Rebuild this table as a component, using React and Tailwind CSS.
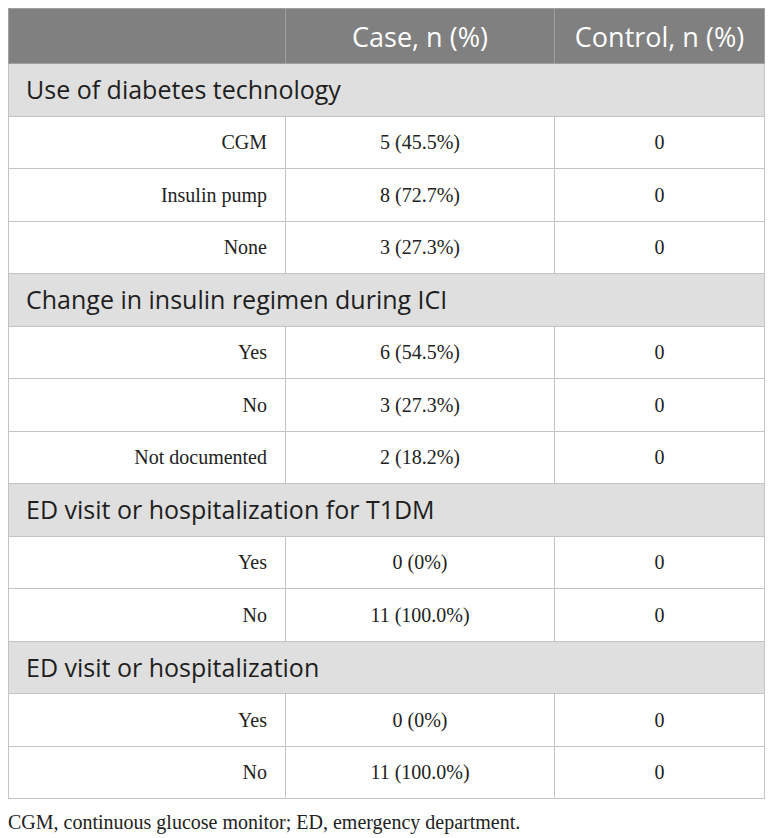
import React from 'react';

const sections = [
  {
    title: 'Use of diabetes technology',
    rows: [
      ['CGM', '5 (45.5%)', '0'],
      ['Insulin pump', '8 (72.7%)', '0'],
      ['None', '3 (27.3%)', '0'],
    ],
  },
  {
    title: 'Change in insulin regimen during ICI',
    rows: [
      ['Yes', '6 (54.5%)', '0'],
      ['No', '3 (27.3%)', '0'],
      ['Not documented', '2 (18.2%)', '0'],
    ],
  },
  {
    title: 'ED visit or hospitalization for T1DM',
    rows: [
      ['Yes', '0 (0%)', '0'],
      ['No', '11 (100.0%)', '0'],
    ],
  },
  {
    title: 'ED visit or hospitalization',
    rows: [
      ['Yes', '0 (0%)', '0'],
      ['No', '11 (100.0%)', '0'],
    ],
  },
];

const sans = "font-['Open_Sans',sans-serif]";
const serif = "font-['Liberation_Serif',serif]";

export default function App() {
  return (
    <div className="bg-white w-[772px] h-[838px] pt-[8px] px-[8px]">
      <table className="w-[756px] border-collapse table-fixed">
        <colgroup>
          <col className="w-[277px]" />
          <col className="w-[269px]" />
          <col className="w-[210px]" />
        </colgroup>
        <thead>
          <tr className={`h-[55px] bg-[#808080] text-white text-[27px] leading-none ${sans}`}>
            <th className="border border-[#a0a0a0] font-normal" />
            <th className="border border-[#a0a0a0] font-normal text-center">Case, n (%)</th>
            <th className="border border-[#a0a0a0] font-normal text-center">Control, n (%)</th>
          </tr>
        </thead>
        <tbody>
          {sections.map((s) => (
            <React.Fragment key={s.title}>
              <tr className="h-[52.5px] bg-[#dfdfdf]">
                <td colSpan={3} className={`border border-[#c4c4c4] pl-[17px] text-[25px] leading-none text-[#1e1e1e] ${sans}`}>
                  {s.title}
                </td>
              </tr>
              {s.rows.map((r, i) => (
                <tr key={i} className={`h-[52.5px] text-[20px] text-[#222] ${serif}`}>
                  <td className="border border-[#c4c4c4] text-right pr-[18px]">{r[0]}</td>
                  <td className="border border-[#c4c4c4] text-center">{r[1]}</td>
                  <td className="border border-[#c4c4c4] text-center">{r[2]}</td>
                </tr>
              ))}
            </React.Fragment>
          ))}
        </tbody>
      </table>
      <p className={`mt-[8px] text-[20px] text-[#222] ${serif}`}>
        CGM, continuous glucose monitor; ED, emergency department.
      </p>
    </div>
  );
}
